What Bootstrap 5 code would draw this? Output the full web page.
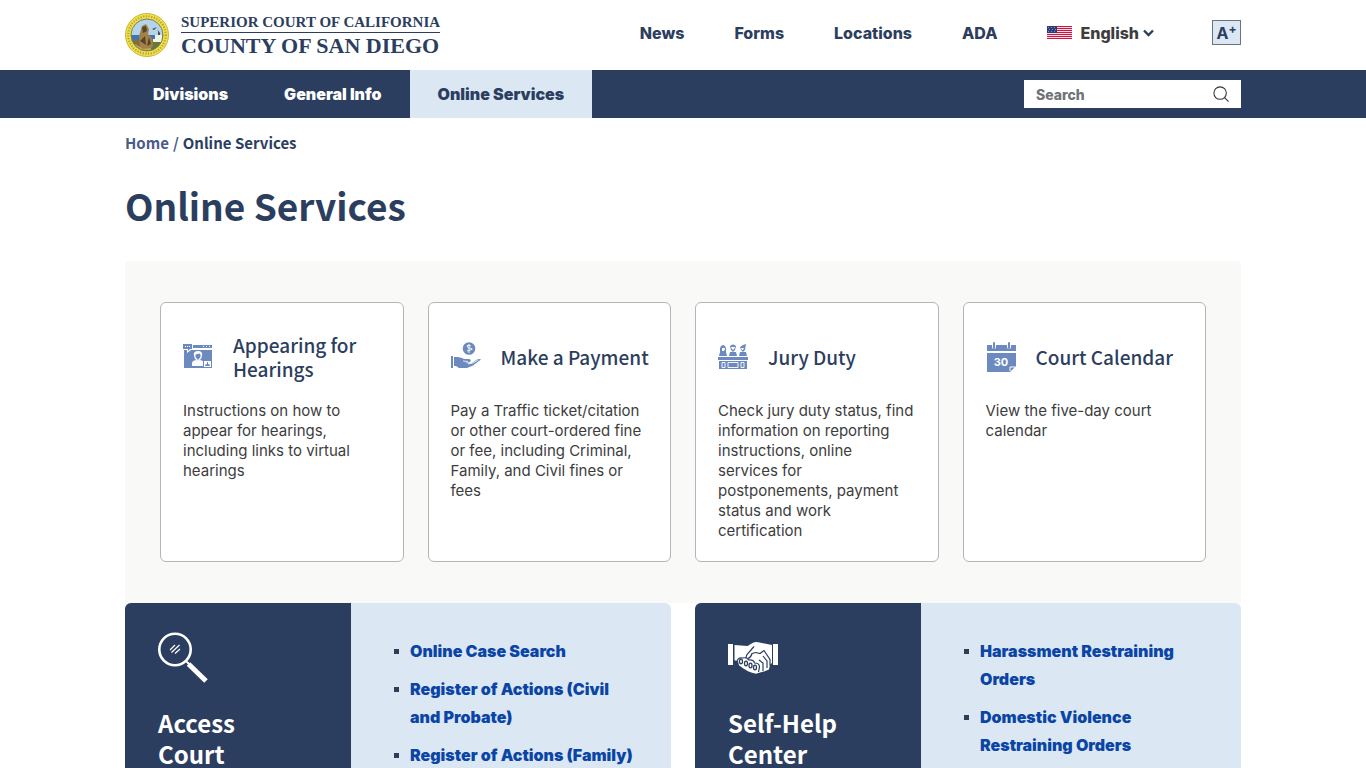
<!DOCTYPE html>
<html lang="en">
<head>
<meta charset="utf-8">
<meta name="viewport" content="width=device-width, initial-scale=1">
<title>Online Services | Superior Court of California, County of San Diego</title>
<link href="https://cdn.jsdelivr.net/npm/bootstrap@5.3.0/dist/css/bootstrap.min.css" rel="stylesheet">
<style>
  :root { --navy: #2c3e60; --pale: #dbe7f3; --source: "Noto Sans CJK SC", "Noto Sans", sans-serif; }
  body { font-family: Inter, "Liberation Sans", sans-serif; color: #3d3d3d; font-size: 15px; }
  a { text-decoration: none; }
  .court-brand { color: var(--navy); font-family: "Liberation Serif", serif; line-height: 19px; white-space: nowrap; }
  .brand-court { font-size: 15px; font-weight: 700; border-bottom: 1px solid var(--navy); }
  .brand-county { font-size: 22px; font-weight: 700; line-height: 25px; }
  .top-bar { height: 70px; }
  .top-links { gap: 50px; font-size: 16px; font-weight: 800; padding-bottom: 5px; }
  .top-links a { color: var(--navy); }
  .lang-btn { color: #3d3d3d; font-weight: 800; }
  .size-btn { width: 29px; height: 25px; background: var(--pale); border: 1px solid #6b7280; color: var(--navy); font-weight: 700; line-height: 22px; }
  .size-btn sup { font-size: 12px; top: -6px; }
  .main-nav { background: var(--navy); }
  .main-nav .nav-link { color: #fff; font-size: 16px; font-weight: 900; line-height: 24px; padding: 12px 28px; }
  .main-nav .nav-link.active { background: var(--pale); color: var(--navy); font-weight: 900; }
  .search-box { width: 217px; height: 28px; background: #fff; }
  .search-box input { font-size: 14px; font-weight: 800; padding: 0 12px; }
  .search-box input::placeholder { color: #6f7277; opacity: 1; }
  .crumbs { font: 700 15px/22px var(--source); padding-top: 14px; }
  .crumbs a, .crumbs .slash { color: #4a5a8a; }
  .crumbs .here { color: var(--navy); }
  h1, h2, h3 { font-family: var(--source); color: var(--navy); }
  h1 { font-size: 37px; font-weight: 700; line-height: 48px; margin: 27px 0 32px; }
  .panel { background: #f9f9f7; padding: 41px 35px; }
  .service { border: 1px solid #b5b5b5; border-radius: 6px; padding: 30px 22px 20px; }
  .service-head { min-height: 48px; gap: 20px; margin-bottom: 20px; }
  .service h2 { font-size: 19px; font-weight: 500; line-height: 24px; }
  .service p { line-height: 20px; }
  .topic { border-radius: 6px 6px 0 0; background: var(--pale); }
  .topic-side { width: 226px; background: var(--navy); padding: 28px 33px 0; }
  .topic-side h3 { color: #fff; font-size: 24px; font-weight: 700; line-height: 31px; margin-top: 22px; width: 120px; }
  .topic-list { padding: 34px 30px 0 59px; list-style: none; font-size: 16px; font-weight: 900; line-height: 28px; }
  .topic-list li { margin-bottom: 10px; position: relative; }
  .topic-list li::before { content: ""; position: absolute; left: -16px; top: 12px; width: 5px; height: 5px; background: #2f3e52; }
  .topic-list a { color: #0a45a6; }
</style>
</head>
<body>
<div class="vh-100 overflow-hidden">
<header>
  <div class="container top-bar d-flex align-items-center justify-content-between">
    <a href="#" class="court-brand d-flex align-items-center">
      <svg width="44" height="44" viewBox="0 0 44 44" aria-hidden="true">
        <defs><clipPath id="sealclip"><circle cx="22" cy="22" r="16"/></clipPath></defs>
        <circle cx="22" cy="22" r="21.5" fill="#f2e04a" stroke="#cdb63a"/>
        <circle cx="22" cy="22" r="18.700" fill="none" stroke="#77702e" stroke-width="2.200" stroke-dasharray="1.2 1.5" opacity=".55"/>
        <g clip-path="url(#sealclip)">
          <path fill="#b5d4ec" d="M5 5h34v18H5z"/><path fill="#3e76ae" d="M5 22h34v5H5z"/>
          <path fill="#806f3c" d="M5 27h34v12H5z"/><path fill="#66783c" d="M26 28l13-2v12H22z"/>
          <path fill="#a3814a" d="M15 35l-1-12 3-10 4-2 3 5-1 5 4 4 1 8-5 5z"/>
          <path fill="#594524" d="M17 14l4-1 1 5-4 2zM15 28l5-5 1 9zM24 24l2 7-4 2z"/>
          <path fill="#f4f1e5" d="M30 22h7v7h-7zM28 26h3v3h-3z"/><path d="M33 22v-4l-1-2 3 4v2zM27 16l5-2-3 3z" fill="#42514e"/>
          <path d="M10 32l8 5 8-1" stroke="#c8a456" stroke-width="2" fill="none"/>
        </g>
        <circle cx="22" cy="22" r="16" fill="none" stroke="#77824b"/>
      </svg>
      <span class="ms-2 ps-1 d-flex flex-column"><span class="brand-court">SUPERIOR COURT OF CALIFORNIA</span><span class="brand-county">COUNTY OF SAN DIEGO</span></span>
    </a>
    <nav class="top-links d-flex align-items-center" aria-label="Utility">
      <a href="#">News</a><a href="#">Forms</a><a href="#">Locations</a><a href="#">ADA</a>
      <button type="button" class="lang-btn btn p-0 border-0 d-flex align-items-center">
        <svg class="me-2" width="25" height="13" viewBox="0 0 25 13" shape-rendering="crispEdges" aria-hidden="true"><path fill="#f6dfe4" d="M0 0h25v13H0z"/><path fill="#d0123f" d="M0 0h25v1H0zM0 2h25v1H0zM0 4h25v1H0zM0 6h25v1H0zM0 8h25v1H0zM0 10h25v1H0zM0 12h25v1H0z"/><path fill="#293b78" d="M0 0h10v7H0z"/><path fill="#8797c4" d="M1 1h1v1H1zM4 1h1v1H4zM7 1h1v1H7zM2 3h1v1H2zM5 3h1v1H5zM8 3h1v1H8zM1 5h1v1H1zM4 5h1v1H4zM7 5h1v1H7z"/></svg>
        English
        <svg class="ms-1" width="11" height="8" viewBox="0 0 11 8" aria-hidden="true"><path d="M1 1.500L5.500 6 10 1.500" fill="none" stroke="#2c3e60" stroke-width="2.400"/></svg>
      </button>
      <button type="button" class="size-btn btn p-0 rounded-0 ms-2" aria-label="Increase text size">A<sup>+</sup></button>
    </nav>
  </div>
  <div class="main-nav">
    <div class="container d-flex align-items-center justify-content-between">
      <nav class="nav" aria-label="Main"><a class="nav-link" href="#">Divisions</a><a class="nav-link" href="#">General Info</a><a class="nav-link active" aria-current="page" href="#">Online Services</a></nav>
      <form class="search-box d-flex align-items-center" role="search">
        <input class="form-control border-0 bg-transparent shadow-none" type="search" placeholder="Search" aria-label="Search">
        <button class="btn p-0 border-0 me-2 pe-1 d-flex" type="submit" aria-label="Submit search"><svg width="16" height="16" viewBox="0 0 18 18" fill="none" stroke="#333" stroke-width="1.200"><circle cx="8" cy="8" r="7"/><path d="M13 13L17.500 17.500"/></svg></button>
      </form>
    </div>
  </div>
</header>
<main class="container">
  <nav class="crumbs d-flex" aria-label="Breadcrumb"><a href="#">Home</a><span class="slash mx-1">/</span><span class="here">Online Services</span></nav>
  <h1>Online Services</h1>
  <section class="panel rounded-top-1">
    <div class="row">
      <div class="col-3"><article class="service bg-white h-100">
        <div class="service-head d-flex align-items-center">
          <svg class="flex-shrink-0" width="30" height="30" viewBox="0 0 30 30" aria-hidden="true"><path fill="#6c8abf" d="M0 2h9v5H7l-2 2V7H0zM10 3h19v3H10zM1 8h3v3l4-3h21v18H1z"/><path fill="#fff" d="M2 4h1v1H2zM4 4h1v1H4zM6 4h1v1H6zM20 4h1v1h-1zM23 4h1v1h-1zM26 4h1v1h-1zM9 24v-3l1-2 3-1 2 1 2-1 3 1v5zM15 9q5 0 4 5l-1 3-3 2-3-2-1-3q-1-5 4-5M21 19h7v6h-7z"/><path fill="#6c8abf" d="M12.500 12.500l4-1 1 1v2.500l-2.500 3-2.500-3zM22 24q0-2 2-2v-2h1v2q2 0 2 2z"/></svg>
          <h2 class="mb-0">Appearing for Hearings</h2></div>
        <p class="mb-0">Instructions on how to appear for hearings, including links to virtual hearings</p>
      </article></div>
      <div class="col-3"><article class="service bg-white h-100">
        <div class="service-head d-flex align-items-center">
          <svg class="flex-shrink-0" width="30" height="30" viewBox="0 0 30 30" aria-hidden="true"><g fill="#6c8abf"><circle cx="18" cy="6.500" r="6.300"/><path d="M0 14h2v12H0zM3 15h4l4 1 2 1h5q3 1 1 3l-5 1 6 .5 6-4q3-1 4 0l-8 6-6 2.500H8l-3-2H3z"/></g><path d="M20 4q-4-2-4 0t4 2.500-4 2.500M18 2v9" stroke="#fff" stroke-width=".9" fill="none"/><path d="M12 19l5 .5M17 22l5-1 5-3" stroke="#fff" stroke-width=".8" fill="none"/></svg>
          <h2 class="mb-0 text-nowrap">Make a Payment</h2></div>
        <p class="mb-0">Pay a Traffic ticket/citation or other court-ordered fine or fee, including Criminal, Family, and Civil fines or fees</p>
      </article></div>
      <div class="col-3"><article class="service bg-white h-100">
        <div class="service-head d-flex align-items-center">
          <svg class="flex-shrink-0" width="30" height="30" viewBox="0 0 30 30" aria-hidden="true"><g fill="#6c8abf"><path d="M0 15h30v3H0zM1 19h28v8H1zM1 14l1-4h6l1 4zM11 14l1-4h6l1 4zM21 14l1-4h6l1 4z"/><path d="M2 10V6q1-3 3-3t3 3v4zM12 4q3-3 6 0l-1 4-2 2-2-2zM22 5l3-2 3-1-1 6-2 2-2-2z"/></g><path d="M4 6h3v1l-1 2H4zM13 5h4l-1 2-1 1-1-1zM23 6h3l-1 2h-1z" fill="#fff"/><path d="M4 20.500h3v5H4zM10 20.500h10v5H10zM23 20.500h3v5h-3z" fill="none" stroke="#fff" stroke-width=".9"/></svg>
          <h2 class="mb-0">Jury Duty</h2></div>
        <p class="mb-0">Check jury duty status, find information on reporting instructions, online services for postponements, payment status and work certification</p>
      </article></div>
      <div class="col-3"><article class="service bg-white h-100">
        <div class="service-head d-flex align-items-center">
          <svg class="flex-shrink-0" width="30" height="30" viewBox="0 0 30 30" aria-hidden="true"><path fill="#6c8abf" d="M1 3h29v6H1zM1 11h29v13l-6 6H1z"/><path d="M8 1v4M23 1v4" stroke="#fff" stroke-width="4" stroke-linecap="round"/><path d="M8 1v5M23 1v5" stroke="#6c8abf" stroke-width="2" stroke-linecap="round"/><path d="M24 29v-4h5" fill="none" stroke="#fff"/><text x="15" y="24" text-anchor="middle" font-family="Inter" font-size="11" font-weight="700" fill="#fff">30</text></svg>
          <h2 class="mb-0">Court Calendar</h2></div>
        <p class="mb-0">View the five-day court calendar</p>
      </article></div>
    </div>
  </section>
  <section class="row">
    <div class="col-6"><div class="topic d-flex overflow-hidden h-100">
      <div class="topic-side flex-shrink-0">
        <svg class="d-block" width="52" height="54" viewBox="0 0 52 54" fill="none" stroke="#fff" aria-hidden="true"><circle cx="17" cy="18.500" r="15.700" stroke-width="2.600"/><path d="M28.500 30.500l3 3" stroke-width="2"/><path d="M30.500 33L48 50" stroke-width="5"/><path d="M12 19l5-5M13.500 21.500l8-7.500M17 22.500l5-4.500" stroke-width="1.200"/></svg>
        <h3 class="mb-0">Access Court</h3>
      </div>
      <ul class="topic-list mb-0"><li><a href="#">Online Case Search</a></li><li><a href="#">Register of Actions (Civil and Probate)</a></li><li><a href="#">Register of Actions (Family)</a></li></ul>
    </div></div>
    <div class="col-6"><div class="topic d-flex overflow-hidden h-100">
      <div class="topic-side flex-shrink-0">
        <svg class="d-block" width="52" height="54" viewBox="0 0 52 54" aria-hidden="true"><path fill="#fff" d="M0 13h5v21H0zM45 13h5v21h-5zM6.500 14l13 1 5-3q3-1.500 7-.5l12.500 2.500v18l-2 1.500-1 5-5 2-4 1-4 1.200-4-1-4-1.500-5-3-4-3-1-4-3.500-1z"/><path d="M26 15.500l-7 8q-2 4 1 4 3-1 4-5l4-1 4 1 4-3 6 9v6M31 29l4 3v8M35 25l4 5v7M8.500 32q1-6 6-5 5-1 6 2 5-1 6 3 5 0 5 4l-1 5" fill="none" stroke="#2c3e60" stroke-width="1.200"/><g fill="none" stroke="#2c3e60" stroke-width="1.300"><ellipse cx="13" cy="30.500" rx="1.500" ry="2.300"/><ellipse cx="18" cy="32.500" rx="1.500" ry="2.300"/><ellipse cx="22.500" cy="34.500" rx="1.500" ry="2.300"/><ellipse cx="27" cy="36.500" rx="1.500" ry="2.300"/></g></svg>
        <h3 class="mb-0">Self-Help Center</h3>
      </div>
      <ul class="topic-list mb-0"><li><a href="#">Harassment Restraining Orders</a></li><li><a href="#">Domestic Violence Restraining Orders</a></li></ul>
    </div></div>
  </section>
</main>
</div>
<script src="https://cdn.jsdelivr.net/npm/bootstrap@5.3.0/dist/js/bootstrap.bundle.min.js"></script>
</body>
</html>
